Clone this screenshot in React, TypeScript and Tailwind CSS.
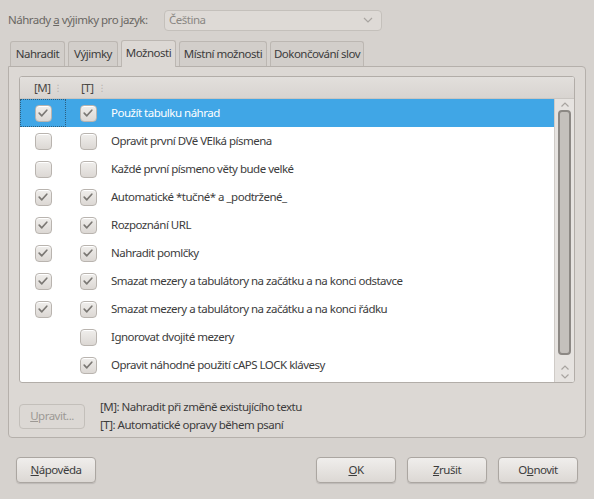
import React from "react";

const rows: { text: string; m: boolean | null; t: boolean }[] = [
  { text: "Použít tabulku náhrad", m: true, t: true },
  { text: "Opravit první DVě VElká písmena", m: false, t: false },
  { text: "Každé první písmeno věty bude velké", m: false, t: false },
  { text: "Automatické *tučné* a _podtržené_", m: true, t: true },
  { text: "Rozpoznání URL", m: true, t: true },
  { text: "Nahradit pomlčky", m: true, t: true },
  { text: "Smazat mezery a tabulátory na začátku a na konci odstavce", m: true, t: true },
  { text: "Smazat mezery a tabulátory na začátku a na konci řádku", m: true, t: true },
  { text: "Ignorovat dvojité mezery", m: null, t: false },
  { text: "Opravit náhodné použití cAPS LOCK klávesy", m: null, t: true },
];

function Check({ checked }: { checked: boolean }) {
  return (
    <div className="w-[17px] h-[17px] rounded-[4px] border border-[#b9b4af] bg-gradient-to-b from-[#f0eeec] to-[#dcd8d4] flex items-center justify-center shadow-[inset_0_1px_0_#ffffff]">
      {checked && (
        <svg width="12" height="12" viewBox="0 0 12 12">
          <path d="M2.2 6.2 L4.8 8.8 L9.8 3.2" fill="none" stroke="#7b7874" strokeWidth="1.7" strokeLinecap="round" strokeLinejoin="round" />
        </svg>
      )}
    </div>
  );
}

function Btn({ children, className = "" }: { children: React.ReactNode; className?: string }) {
  return (
    <div className={"h-[26px] rounded-[4px] border border-[#aba6a1] bg-gradient-to-b from-[#f0eeec] to-[#dcd8d4] flex items-center justify-center text-[#3c3c3c] shadow-[0_1px_1px_rgba(0,0,0,0.12)] " + className}>
      {children}
    </div>
  );
}

export default function App() {
  return (
    <div
      className="w-[594px] h-[499px] bg-[#d6d2ce] text-[11.5px] tracking-[-0.5px] text-[#3c3c3c] overflow-hidden"
      style={{ fontFamily: '"Noto Sans", "DejaVu Sans", sans-serif' }}
    >
      {/* top row */}
      <div className="flex items-center pt-[9px] pl-[8px] h-[31px]">
        <div className="w-[156px] shrink-0 text-[#6a6763]">
          Náhrady <span className="underline">a</span> výjimky pro jazyk:
        </div>
        <div className="w-[218px] shrink-0 h-[21px] rounded-[4px] border border-[#c4c0bb] bg-[#dedad6] flex items-center pl-[4px] pr-[8px] text-[#8a8783]">
          <span className="flex-1">Čeština</span>
          <svg width="10" height="6" viewBox="0 0 10 6">
            <path d="M1 1 L5 5 L9 1" fill="none" stroke="#a9a5a1" strokeWidth="1.2" />
          </svg>
        </div>
      </div>

      {/* tabs */}
      <div className="flex items-end gap-[3px] pl-[10px] mt-[8px] h-[27px] whitespace-nowrap">
        <div className="w-[55px] h-[25px] border border-b-0 border-[#bcb7b2] rounded-t-[3px] bg-[#d2ceca] flex items-center justify-center">Nahradit</div>
        <div className="w-[50px] h-[25px] border border-b-0 border-[#bcb7b2] rounded-t-[3px] bg-[#d2ceca] flex items-center justify-center">Výjimky</div>
        <div className="w-[55px] h-[27px] border border-b-0 border-[#bcb7b2] rounded-t-[3px] bg-[#dcd8d4] flex items-center justify-center relative z-10 -mb-[1px] pb-[2px]">Možnosti</div>
        <div className="w-[88px] h-[25px] border border-b-0 border-[#bcb7b2] rounded-t-[3px] bg-[#d2ceca] flex items-center justify-center">Místní možnosti</div>
        <div className="w-[94px] h-[25px] border border-b-0 border-[#bcb7b2] rounded-t-[3px] bg-[#d2ceca] flex items-center justify-center">Dokončování slov</div>
      </div>

      {/* panel */}
      <div className="mx-[8px] h-[372px] border border-[#b5b0ab] rounded-b-[4px] rounded-tr-[4px] bg-[#dcd8d4] pt-[9px] px-[10px]">
        {/* list frame */}
        <div className="h-[307px] border border-[#b2ada8] rounded-[3px] bg-white flex flex-col overflow-hidden">
          {/* header */}
          <div className="h-[22px] flex items-center bg-gradient-to-b from-[#e2dfdc] to-[#d8d4d0] border-b border-[#c9c5c1] text-[#4a4744]">
            <div className="w-[44px] flex items-center">
              <span className="ml-[14px]">[M]</span>
              <span className="ml-auto mr-[2px] text-[#b5b1ad] text-[9px]">⋮</span>
            </div>
            <div className="w-[44px] flex items-center">
              <span className="ml-[17px]">[T]</span>
              <span className="ml-auto mr-[2px] text-[#b5b1ad] text-[9px]">⋮</span>
            </div>
          </div>
          <div className="flex flex-1 min-h-0">
            <div className="flex-1 flex flex-col">
              {rows.map((r, i) => (
                <div
                  key={i}
                  className={
                    "h-[28px] flex items-center shrink-0 " +
                    (i === 0 ? "bg-[#40a6e6] text-white" : "text-[#3c3c3c]")
                  }
                >
                  <div
                    className={
                      "w-[46px] h-full flex items-center justify-center " +
                      (i === 0 ? "border border-dotted border-[#2c5f80]" : "")
                    }
                  >
                    {r.m !== null && <Check checked={r.m} />}
                  </div>
                  <div className="w-[44px] h-full flex items-center justify-center">
                    <Check checked={r.t} />
                  </div>
                  <div className="ml-[1px] whitespace-nowrap">{r.text}</div>
                </div>
              ))}
            </div>
            {/* scrollbar */}
            <div className="w-[20px] bg-[#e6e3e0] border-l border-[#cfcbc7] flex flex-col items-center pt-[2px] pb-[2px]">
              <svg width="10" height="7" viewBox="0 0 10 7" className="shrink-0">
                <path d="M1.5 5.5 L5 2 L8.5 5.5" fill="none" stroke="#a8a4a0" strokeWidth="1.2" />
              </svg>
              <div className="w-[13px] h-[245px] mt-[2px] rounded-[4px] border-2 border-[#8c8884] bg-[#c4c0bc] shrink-0" />
              <div className="flex-1" />
              <svg width="10" height="7" viewBox="0 0 10 7" className="shrink-0">
                <path d="M1.5 5.5 L5 2 L8.5 5.5" fill="none" stroke="#a8a4a0" strokeWidth="1.2" />
              </svg>
              <svg width="10" height="7" viewBox="0 0 10 7" className="shrink-0 mt-[2px]">
                <path d="M1.5 1.5 L5 5 L8.5 1.5" fill="none" stroke="#a8a4a0" strokeWidth="1.2" />
              </svg>
            </div>
          </div>
        </div>

        {/* below list */}
        <div className="flex items-center mt-[15px]">
          <div className="w-[66px] h-[25px] rounded-[4px] border border-[#c3bfba] bg-[#dcd8d4] flex items-center justify-center text-[#9c9894]">
            <span><span className="underline">U</span>pravit...</span>
          </div>
          <div className="ml-[15px] flex flex-col leading-[18px]">
            <span>[M]: Nahradit při změně existujícího textu</span>
            <span>[T]: Automatické opravy během psaní</span>
          </div>
        </div>
      </div>

      {/* bottom buttons */}
      <div className="flex items-center mt-[19px] px-[16px]">
        <Btn className="w-[80px]"><span><span className="underline">N</span>ápověda</span></Btn>
        <div className="flex-1" />
        <Btn className="w-[80px]"><span><span className="underline">O</span>K</span></Btn>
        <Btn className="w-[80px] ml-[11px]"><span><span className="underline">Z</span>rušit</span></Btn>
        <Btn className="w-[80px] ml-[11px]"><span>O<span className="underline">b</span>novit</span></Btn>
      </div>
    </div>
  );
}
